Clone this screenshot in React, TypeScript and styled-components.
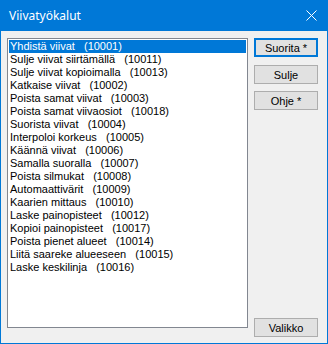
import React from "react";
import styled, {createGlobalStyle} from "styled-components";

const GlobalStyle = createGlobalStyle`
  html, body {
    margin: 0;
    padding: 0;
    background: #f0f0f0;
  }
`;

const tools: [string, string][] = [
    ["Yhdistä viivat", "10001"],
    ["Sulje viivat siirtämällä", "10011"],
    ["Sulje viivat kopioimalla", "10013"],
    ["Katkaise viivat", "10002"],
    ["Poista samat viivat", "10003"],
    ["Poista samat viivaosiot", "10018"],
    ["Suorista viivat", "10004"],
    ["Interpoloi korkeus", "10005"],
    ["Käännä viivat", "10006"],
    ["Samalla suoralla", "10007"],
    ["Poista silmukat", "10008"],
    ["Automaattivärit", "10009"],
    ["Kaarien mittaus", "10010"],
    ["Laske painopisteet", "10012"],
    ["Kopioi painopisteet", "10017"],
    ["Poista pienet alueet", "10014"],
    ["Liitä saareke alueeseen", "10015"],
    ["Laske keskilinja", "10016"],
];

const CloseIcon = () => (
    <svg width="11" height="11" viewBox="0 0 11 11">
        <path d="M0.5 0.5 L10.5 10.5 M10.5 0.5 L0.5 10.5" stroke="#fff" strokeWidth="1" fill="none"/>
    </svg>
);

export default function App() {
    const selected = 0;
    return (
        <>
            <GlobalStyle/>
            <Window>
                <TitleBar>
                    <Title>Viivatyökalut</Title>
                    <CloseButton><CloseIcon/></CloseButton>
                </TitleBar>
                <Body>
                    <ListBox>
                        {tools.map(([name, code], i) => (
                            <Item key={code} $selected={i === selected}>{`${name}   (${code})`}</Item>
                        ))}
                    </ListBox>
                    <Side>
                        <Button $default>Suorita *</Button>
                        <Button $top="8px">Sulje</Button>
                        <Button $top="7px">Ohje *</Button>
                        <Button $top="auto">Valikko</Button>
                    </Side>
                </Body>
            </Window>
        </>
    );
}

const Window = styled.div`
  width: 328px;
  height: 344px;
  box-sizing: border-box;
  border: 1px solid #0078d7;
  background: #f0f0f0;
  display: flex;
  flex-direction: column;
`;

const TitleBar = styled.div`
  height: 30px;
  background: #0078d7;
  display: flex;
  align-items: center;
  justify-content: space-between;
  padding: 0 10px 0 8px;
  flex-shrink: 0;
`;

const Title = styled.span`
  font-family: "Noto Sans", "Open Sans", sans-serif;
  font-size: 12px;
  color: #fff;
  margin-top: -1px;
`;

const CloseButton = styled.span`
  display: flex;
  margin-top: -1px;
`;

const Body = styled.div`
  flex: 1;
  display: flex;
  gap: 6px;
  padding: 7px 9px 6px 6px;
`;

const ListBox = styled.div`
  width: 241px;
  height: 290px;
  box-sizing: border-box;
  border: 1px solid #828790;
  background: #fff;
  padding: 1px;
  overflow: hidden;
`;

const Item = styled.div<{ $selected?: boolean }>`
  height: 13px;
  line-height: 13px;
  padding-left: 1px;
  white-space: pre;
  font-family: "Liberation Sans", Arial, sans-serif;
  font-size: 11px;
  color: ${p => p.$selected ? "#fff" : "#000"};
  background: ${p => p.$selected ? "#0078d7" : "transparent"};
`;

const Side = styled.div`
  display: flex;
  flex-direction: column;
  width: 64px;
  height: 299px;
`;

const Button = styled.div<{ $default?: boolean; $top?: string }>`
  height: 19px;
  margin-top: ${p => p.$top ?? "0"};
  box-sizing: border-box;
  border: ${p => p.$default ? "2px solid #0078d7" : "1px solid #adadad"};
  background: #e1e1e1;
  display: flex;
  align-items: center;
  justify-content: center;
  font-family: "Liberation Sans", Arial, sans-serif;
  font-size: 11px;
  color: #000;
`;
